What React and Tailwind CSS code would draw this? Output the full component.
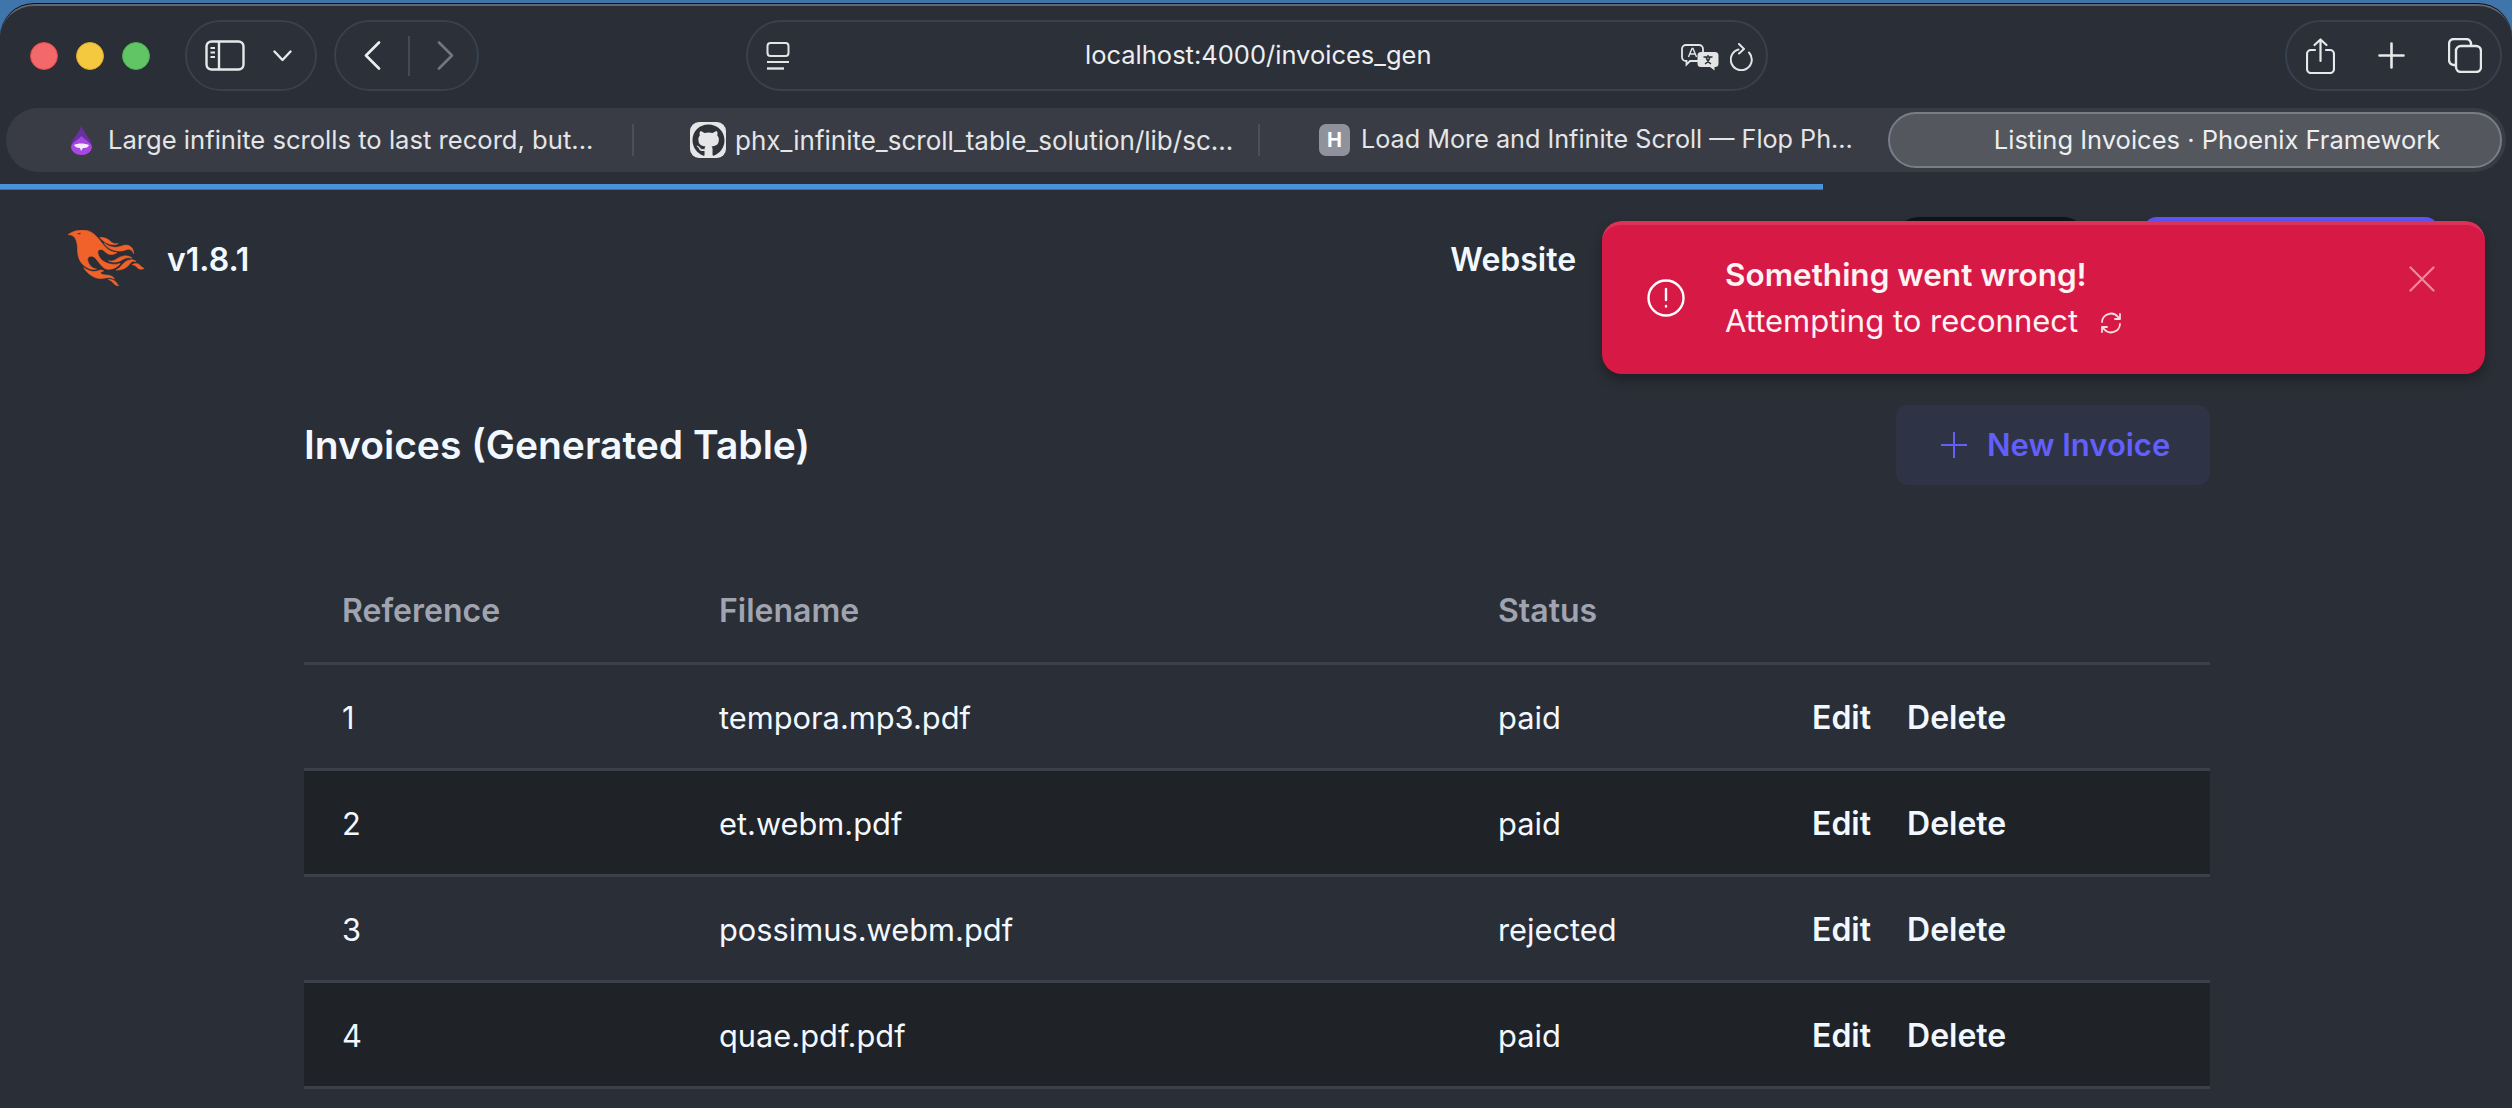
import React from "react";
import { FaGithub } from "react-icons/fa";

const LOGO =
  "m26.371 33.477-.552-.1c-3.92-.729-6.397-3.1-7.57-6.829-.733-2.324.597-4.035 3.035-4.148 1.995-.092 3.362 1.055 4.57 2.39 1.557 1.72 2.984 3.558 4.514 5.305 2.202 2.515 4.797 4.134 8.347 3.634 3.183-.448 5.958-1.725 8.371-3.828.363-.316.761-.592 1.144-.886l-.241-.284c-2.027.63-4.093.841-6.205.735-3.195-.16-6.24-.828-8.964-2.582-2.486-1.601-4.319-3.746-5.19-6.611-.704-2.315.736-3.934 3.135-3.6.948.133 1.746.56 2.463 1.165.583.493 1.143 1.015 1.738 1.493 2.8 2.25 6.712 2.375 10.265-.068-5.842-.026-9.817-3.24-13.308-7.313-1.366-1.594-2.7-3.216-4.095-4.785-2.698-3.036-5.692-5.71-9.79-6.623C12.8-.623 7.745.14 2.893 2.361 1.926 2.804.997 3.319 0 4.149c.494 0 .763.006 1.032 0 2.446-.064 4.28 1.023 5.602 3.024.962 1.457 1.415 3.104 1.761 4.798.513 2.515.247 5.078.544 7.605.761 6.494 4.08 11.026 10.26 13.346 2.267.852 4.591 1.135 7.172.555ZM10.751 3.852c-.976.246-1.756-.148-2.56-.962 1.377-.343 2.592-.476 3.897-.528-.107.848-.607 1.306-1.336 1.49Zm32.002 37.924c-.085-.626-.62-.901-1.04-1.228-1.857-1.446-4.03-1.958-6.333-2-1.375-.026-2.735-.128-4.031-.61-.595-.22-1.26-.505-1.244-1.272.015-.78.693-1 1.31-1.184.505-.15 1.026-.247 1.6-.382-1.46-.936-2.886-1.065-4.787-.3-2.993 1.202-5.943 1.06-8.926-.017-1.684-.608-3.179-1.563-4.735-2.408l-.043.03a2.96 2.96 0 0 0 .04-.029c-.038-.117-.107-.12-.197-.054l.122.107c1.29 2.115 3.034 3.817 5.004 5.271 3.793 2.8 7.936 4.471 12.784 3.73A66.714 66.714 0 0 1 37 40.877c1.98-.16 3.866.398 5.753.899Zm-9.14-30.345c-.105-.076-.206-.266-.42-.069 1.745 2.36 3.985 4.098 6.683 5.193 4.354 1.767 8.773 2.07 13.293.51 3.51-1.21 6.033-.028 7.343 3.38.19-3.955-2.137-6.837-5.843-7.401-2.084-.318-4.01.373-5.962.94-5.434 1.575-10.485.798-15.094-2.553Zm27.085 15.425c.708.059 1.416.123 2.124.185-1.6-1.405-3.55-1.517-5.523-1.404-3.003.17-5.167 1.903-7.14 3.972-1.739 1.824-3.31 3.87-5.903 4.604.043.078.054.117.066.117.35.005.699.021 1.047.005 3.768-.17 7.317-.965 10.14-3.7.89-.86 1.685-1.817 2.544-2.71.716-.746 1.584-1.159 2.645-1.07Zm-8.753-4.67c-2.812.246-5.254 1.409-7.548 2.943-1.766 1.18-3.654 1.738-5.776 1.37-.374-.066-.75-.114-1.124-.17l-.013.156c.135.07.265.151.405.207.354.14.702.308 1.07.395 4.083.971 7.992.474 11.516-1.803 2.221-1.435 4.521-1.707 7.013-1.336.252.038.503.083.756.107.234.022.479.255.795.003-2.179-1.574-4.526-2.096-7.094-1.872Zm-10.049-9.544c1.475.051 2.943-.142 4.486-1.059-.452.04-.643.04-.827.076-2.126.424-4.033-.04-5.733-1.383-.623-.493-1.257-.974-1.889-1.457-2.503-1.914-5.374-2.555-8.514-2.5.05.154.054.26.108.315 3.417 3.455 7.371 5.836 12.369 6.008Zm24.727 17.731c-2.114-2.097-4.952-2.367-7.578-.537 1.738.078 3.043.632 4.101 1.728a13 13 0 0 0 1.182 1.106c1.6 1.29 4.311 1.352 5.896.155-1.861-.726-1.861-.726-3.601-2.452Zm-21.058 16.06c-1.858-3.46-4.981-4.24-8.59-4.008a9.667 9.667 0 0 1 2.977 1.39c.84.586 1.547 1.311 2.243 2.055 1.38 1.473 3.534 2.376 4.962 2.07-.656-.412-1.238-.848-1.592-1.507Z";

function Pill({ className, children }) {
  return (
    <div className={"flex h-[71px] items-center rounded-[36px] border-2 border-[#38414f] bg-[#2b3039] " + className}>
      {children}
    </div>
  );
}

function Separator() {
  return <div className="h-[32px] w-[2px] shrink-0 bg-[#4c4f57]" />;
}

const rows = [
  ["1", "tempora.mp3.pdf", "paid"],
  ["2", "et.webm.pdf", "paid"],
  ["3", "possimus.webm.pdf", "rejected"],
  ["4", "quae.pdf.pdf", "paid"],
];

export default function App() {
  return (
    <div className="relative h-[1108px] w-[2512px] overflow-hidden bg-[#3f75ab] pt-[3px] font-['Inter',sans-serif]">
      <div className="h-full rounded-t-[34px] bg-[#0f1116] pt-px">
        <div className="h-full rounded-t-[34px] border-t-[2px] border-[#62666d] bg-[#2a2e36]">
          {/* Toolbar */}
          <div className="flex items-center pt-[14px]">
            <div className="ml-[30px] flex gap-[18px]">
              <div className="h-[28px] w-[28px] rounded-full border border-[#e0484c] bg-[#f2686b]" />
              <div className="h-[28px] w-[28px] rounded-full border border-[#dcaa2a] bg-[#f5c93f]" />
              <div className="h-[28px] w-[28px] rounded-full border border-[#4aae4f] bg-[#61c566]" />
            </div>
            <Pill className="ml-[35px] w-[132px] pl-[18px]">
              <svg width="40" height="31" viewBox="0 0 40 31" fill="none" stroke="#e7e8ea" strokeWidth="2.4">
                <rect x="1.5" y="1.5" width="37" height="28" rx="5" />
                <path d="M14 1.5v28" />
                <path d="M5.5 8h4.5M5.5 12.5h4.5M5.5 17h4.5" strokeWidth="1.8" />
              </svg>
              <svg className="ml-[28px]" width="19" height="12" viewBox="0 0 19 12" fill="none" stroke="#e7e8ea" strokeWidth="2.4" strokeLinecap="round" strokeLinejoin="round">
                <path d="M1.5 1.5 9.5 10l8-8.5" />
              </svg>
            </Pill>
            <Pill className="ml-[17px] w-[145px] pl-[28px]">
              <svg width="17" height="29" viewBox="0 0 17 29" fill="none" stroke="#eceded" strokeWidth="2.6" strokeLinecap="round" strokeLinejoin="round">
                <path d="M15 1.5 2 14.5 15 27.5" />
              </svg>
              <div className="ml-[27px] h-[40px] w-[2px] bg-[#464a53]" />
              <svg className="ml-[27px]" width="17" height="29" viewBox="0 0 17 29" fill="none" stroke="#72767d" strokeWidth="2.6" strokeLinecap="round" strokeLinejoin="round">
                <path d="M2 1.5 15 14.5 2 27.5" />
              </svg>
            </Pill>
            <Pill className="relative ml-[267px] w-[1022px] pl-[18px]">
              <svg width="24" height="28" viewBox="0 0 24 28" fill="none" stroke="#e3e4e6" strokeWidth="2">
                <rect x="1.5" y="1" width="21" height="13" rx="3" />
                <path d="M1 20h22" />
                <path d="M1 26.5h17" strokeWidth="2.4" />
              </svg>
              <span className="ml-[295px] text-[25.5px] text-[#eceef0]">localhost:4000/invoices_gen</span>
              <svg className="absolute left-[933px] top-[22px]" width="38" height="27" viewBox="0 0 38 27" fill="none">
                <path d="M5 1h13a4 4 0 0 1 4 4v8a4 4 0 0 1-4 4H9l-3.5 3.5V17H5a4 4 0 0 1-4-4V5a4 4 0 0 1 4-4Z" stroke="#e3e4e6" strokeWidth="1.8" />
                <path d="M7.5 13 11 4.5h1L15.5 13M9 10h5" stroke="#e3e4e6" strokeWidth="1.4" />
                <path d="M20 8h14a3.5 3.5 0 0 1 3.5 3.5v8a3.5 3.5 0 0 1-3.5 3.5h-.5v3.5L29 23h-9a3.5 3.5 0 0 1-3.5-3.5v-8A3.5 3.5 0 0 1 20 8Z" fill="#e3e4e6" />
                <path d="M22.5 13h9M27 11v2M24 20c2.5-1.5 4-3.5 5-7M30 20c-2.5-1.5-4-3.5-5-7" stroke="#2b3039" strokeWidth="1.4" />
              </svg>
              <svg className="absolute left-[982px] top-[21px]" width="24" height="28" viewBox="0 0 24 28" fill="none" stroke="#e3e4e6" strokeWidth="2" strokeLinecap="round" strokeLinejoin="round">
                <path d="M8.5 6.5A10.5 10.5 0 1 0 19 9.5" />
                <path d="M9 1l5 5-5 4.5" />
              </svg>
            </Pill>
            <Pill className="ml-auto mr-[10px] w-[217px] pl-[19px]">
              <svg width="29" height="36" viewBox="0 0 29 36" fill="none" stroke="#e7e8ea" strokeWidth="2.2" strokeLinecap="round" strokeLinejoin="round">
                <path d="M9 12H5a4 4 0 0 0-4 4v15a4 4 0 0 0 4 4h19a4 4 0 0 0 4-4V16a4 4 0 0 0-4-4h-4" />
                <path d="M14.5 23V1.5M8.5 7l6-5.5 6 5.5" />
              </svg>
              <svg className="ml-[43px]" width="27" height="27" viewBox="0 0 27 27" fill="none" stroke="#e7e8ea" strokeWidth="2.6" strokeLinecap="round">
                <path d="M13.5 1.5v24M1.5 13.5h24" />
              </svg>
              <svg className="ml-[43px]" width="34" height="35" viewBox="0 0 34 35" fill="none" stroke="#e7e8ea" strokeWidth="2.4">
                <path d="M7 27H6a5 5 0 0 1-5-5V6a5 5 0 0 1 5-5h12a5 5 0 0 1 5 5v1" />
                <rect x="8" y="8" width="25" height="26" rx="5" />
              </svg>
            </Pill>
          </div>

          {/* Tabs */}
          <div className="ml-[6px] mr-[6px] mt-[17px] flex h-[64px] items-center rounded-[32px] bg-[#393c44] text-[25.6px] text-[#e4e5e7]">
            <svg className="ml-[63px] shrink-0" width="25" height="30" viewBox="0 0 25 30">
              <path d="M12.5 0C11 8 2 14 2 21a10.5 9 0 0 0 21 0C23 14 14 8 12.5 0Z" fill="#6a2fa0" />
              <path d="M12.5 11C9 15 3 17 2 22a10.5 8 0 0 0 21 0c-1-5-7-7-10.5-11Z" fill="#a748e0" />
              <path d="M5 20c4-2 10-2 15 0-1 3-4 3-6 3l-2 3-1-3c-3 0-5-1-6-3Z" fill="#f4ecfa" />
            </svg>
            <span className="ml-[14px] w-[524px] shrink-0 whitespace-nowrap">Large infinite scrolls to last record, but...</span>
            <Separator />
            <div className="ml-[56px] flex h-[36px] w-[36px] shrink-0 items-center justify-center overflow-hidden rounded-[9px] bg-[#e6e6e6]">
              <FaGithub className="h-[33px] w-[33px] text-[#2f3238]" />
            </div>
            <span className="ml-[9px] w-[523px] shrink-0 whitespace-nowrap text-[26px]">phx_infinite_scroll_table_solution/lib/sc...</span>
            <Separator />
            <div className="ml-[59px] flex h-[32px] w-[31px] shrink-0 items-center justify-center rounded-[7px] bg-[#8f929c] text-[20px] font-bold text-white">H</div>
            <span className="ml-[11px] w-[500px] shrink-0 whitespace-nowrap text-[25.2px]">Load More and Infinite Scroll — Flop Ph...</span>
            <div className="ml-[27px] flex h-[56px] w-[614px] shrink-0 items-center justify-center rounded-[28px] border-2 border-[#787d88] bg-[#54575e] pl-[44px] text-[25.5px] text-[#eceef0]">
              Listing Invoices · Phoenix Framework
            </div>
          </div>

          {/* Progress */}
          <div className="mt-[12px] h-[6px] w-[1823px] border-b border-[#3a6f9f] bg-[#4a93d9]" />

          {/* Page header */}
          <header className="flex h-[109px] items-center pl-[68px] pt-[27px]">
            <svg width="77" height="56" viewBox="0 0 71 48" preserveAspectRatio="none">
              <path d={LOGO} fill="#f0622a" stroke="#f0622a" strokeWidth="0.5" />
            </svg>
            <span className="ml-[22px] mt-[3px] text-[32px] font-semibold text-[#f2f8ff]">v1.8.1</span>
            <span className="ml-[1201px] mt-[3px] text-[32px] font-semibold text-[#f2f8ff]">Website</span>
            <div className="ml-[322px] h-[82px] w-[186px] rounded-[20px] bg-[#121317]" />
            <div className="ml-[59px] h-[82px] w-[296px] rounded-[14px] bg-[#5f57f7]" />
          </header>

          {/* Main */}
          <main className="mx-[304px] mt-[106px] w-[1906px]">
            <div className="flex h-[80px] items-center justify-between">
              <h1 className="text-[39px] font-semibold text-[#f2f8ff]">Invoices (Generated Table)</h1>
              <button className="flex h-[80px] w-[314px] items-center rounded-[12px] bg-[#2f3346] pl-[45px] text-[31px] font-semibold text-[#625ffb]">
                <svg width="26" height="26" viewBox="0 0 26 26" fill="none" stroke="#625ffb" strokeWidth="2">
                  <path d="M13 0v26M0 13h26" />
                </svg>
                <span className="ml-[20px]">New Invoice</span>
              </button>
            </div>
            <table className="mt-[74px] w-full table-fixed border-separate border-spacing-0 text-[30.8px] text-[#f2f8ff]">
              <colgroup>
                <col className="w-[377px]" />
                <col className="w-[779px]" />
                <col className="w-[314px]" />
                <col className="w-[436px]" />
              </colgroup>
              <thead>
                <tr className="h-[106px] text-left text-[32px] font-semibold text-[#a0a4b0]">
                  <th className="border-b-[3px] border-[#3c4049] pl-[38px] font-semibold">Reference</th>
                  <th className="border-b-[3px] border-[#3c4049] pl-[38px] font-semibold">Filename</th>
                  <th className="border-b-[3px] border-[#3c4049] pl-[38px] font-semibold">Status</th>
                  <th className="border-b-[3px] border-[#3c4049]" />
                </tr>
              </thead>
              <tbody>
                {rows.map((r, i) => (
                  <tr key={r[0]} className={i % 2 === 1 ? "h-[106px] bg-[#1f2226]" : "h-[106px]"}>
                    <td className="border-b-[3px] border-[#3c4049] pl-[38px] pt-[3px]">{r[0]}</td>
                    <td className="border-b-[3px] border-[#3c4049] pl-[38px] pt-[3px]">{r[1]}</td>
                    <td className="border-b-[3px] border-[#3c4049] pl-[38px] pt-[3px]">{r[2]}</td>
                    <td className="border-b-[3px] border-[#3c4049] pl-[38px] pt-[3px] text-[32px] font-semibold">
                      <span>Edit</span>
                      <span className="ml-[36px]">Delete</span>
                    </td>
                  </tr>
                ))}
              </tbody>
            </table>
          </main>
        </div>
      </div>

      {/* Toast */}
      <div className="absolute left-[1602px] top-[221px] flex h-[153px] w-[883px] items-center rounded-[20px] border-t-[4px] border-[#dc3258] bg-[#d61a45] pb-[3px] pl-[45px] text-[#fdf2f4] shadow-[0_6px_12px_rgba(0,0,0,0.3)]">
        <svg className="shrink-0" width="38" height="38" viewBox="0 0 38 38" fill="none" stroke="#fff" strokeWidth="2.4" strokeLinecap="round">
          <circle cx="19" cy="19" r="17.5" />
          <path d="M19 10v11M19 27v.5" />
        </svg>
        <div className="ml-[40px]">
          <div className="text-[31.5px] font-semibold leading-[46px]">Something went wrong!</div>
          <div className="flex items-center text-[31px] leading-[46px]">
            Attempting to reconnect
            <svg className="ml-[21px] mt-[4px]" width="24" height="22" viewBox="0 0 24 22" fill="none" stroke="#fbdce3" strokeWidth="1.8" strokeLinecap="round" strokeLinejoin="round">
              <path d="M3 10a9 9 0 0 1 16-5l2 2M21 2v5h-5" />
              <path d="M21 12a9 9 0 0 1-16 5l-2-2M3 20v-5h5" />
            </svg>
          </div>
        </div>
        <svg className="absolute left-[807px] top-[41px]" width="26" height="26" viewBox="0 0 26 26" fill="none" stroke="#ee8aa0" strokeWidth="2.2" strokeLinecap="round">
          <path d="M1.5 1.5l23 23M24.5 1.5l-23 23" />
        </svg>
      </div>
    </div>
  );
}
